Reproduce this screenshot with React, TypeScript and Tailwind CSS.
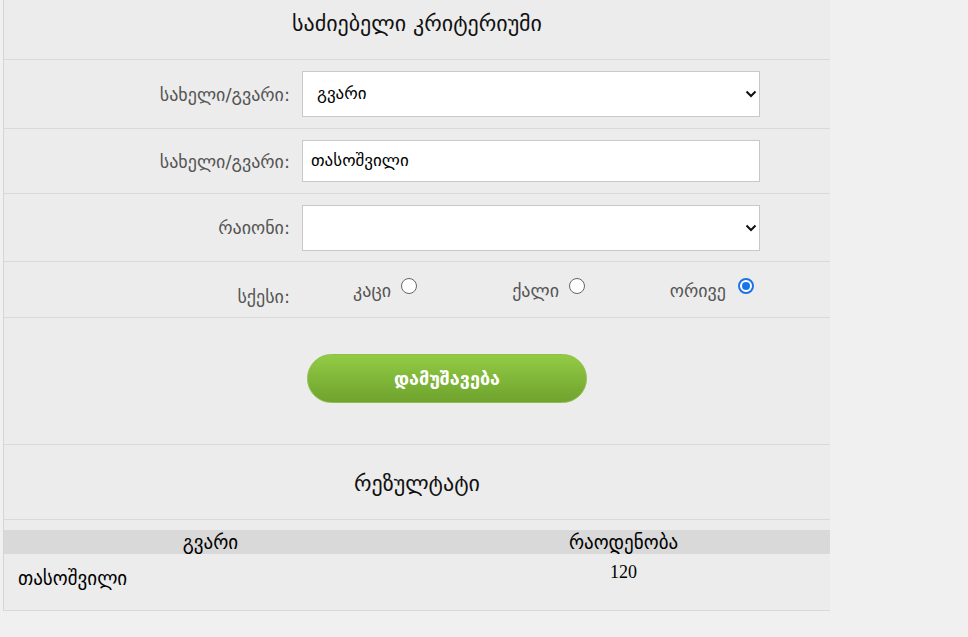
import React from "react";

const geo = "[font-family:'DejaVu_Sans','Noto_Sans',sans-serif]";

function Label({ children }: { children: React.ReactNode }) {
  return (
    <div className="w-[286px] shrink-0 text-right text-[18px] text-[#555]">{children}</div>
  );
}

function Chevron() {
  return (
    <svg width="12" height="8" viewBox="0 0 12 8" className="absolute right-[2px] top-1/2 -translate-y-1/2">
      <path d="M1.5 1.5 L6 6 L10.5 1.5" fill="none" stroke="#111" strokeWidth="2" />
    </svg>
  );
}

function Radio({ checked }: { checked?: boolean }) {
  return checked ? (
    <span className="ml-[12px] mt-[1px] inline-flex h-[16px] w-[16px] shrink-0 items-center justify-center rounded-full border-[2px] border-[#1a73e8] bg-white">
      <span className="h-[8px] w-[8px] rounded-full bg-[#1a73e8]" />
    </span>
  ) : (
    <span className="ml-[10px] mt-[1px] inline-block h-[16px] w-[16px] shrink-0 rounded-full border border-[#666] bg-white" />
  );
}

export default function App() {
  return (
    <div className={`min-h-[637px] w-[968px] bg-[#f0f0f0] ${geo}`}>
      <div className="ml-[3px] w-[827px] border-l border-[#d6d6d6] bg-[#ececec]">
        <div className="flex h-[59px] items-center justify-center pb-[14px] pt-[2px] text-[22px] text-[#111]">
          საძიებელი კრიტერიუმი
        </div>
        <div className="h-px bg-[#d9d9d9]" />
        <div className="flex h-[68px] items-center">
          <Label>სახელი/გვარი:</Label>
          <div className="relative ml-[12px] flex h-[46px] w-[458px] items-center border border-[#c8c8c8] bg-white pl-[14px] text-[17px] text-black">
            გვარი
            <Chevron />
          </div>
        </div>
        <div className="h-px bg-[#d9d9d9]" />
        <div className="flex h-[64px] items-center">
          <Label>სახელი/გვარი:</Label>
          <div className="ml-[12px] flex h-[42px] w-[458px] items-center border border-[#c8c8c8] bg-white pl-[8px] text-[17px] text-black">
            თასოშვილი
          </div>
        </div>
        <div className="h-px bg-[#d9d9d9]" />
        <div className="flex h-[67px] items-center">
          <Label>რაიონი:</Label>
          <div className="relative ml-[12px] h-[46px] w-[458px] border border-[#c8c8c8] bg-white">
            <Chevron />
          </div>
        </div>
        <div className="h-px bg-[#d9d9d9]" />
        <div className="flex h-[55px] items-start pt-[15px]">
          <div className="mt-[6px] w-[286px] text-right text-[18px] text-[#555]">სქესი:</div>
          <div className="flex w-[127px] items-start justify-end text-[18px] text-[#555]">
            <span>კაცი</span>
            <Radio />
          </div>
          <div className="flex w-[168px] items-start justify-end text-[18px] text-[#555]">
            <span>ქალი</span>
            <Radio />
          </div>
          <div className="flex w-[169px] items-start justify-end text-[18px] text-[#555]">
            <span>ორივე</span>
            <Radio checked />
          </div>
        </div>
        <div className="h-px bg-[#d9d9d9]" />
        <div className="flex h-[126px] items-start pt-[36px]">
          <button className="ml-[303px] flex h-[49px] w-[280px] items-center justify-center rounded-full border border-[#8cbf4a] bg-gradient-to-b from-[#93cb44] to-[#6fa32e] text-[18px] font-bold text-white">
            დამუშავება
          </button>
        </div>
        <div className="h-px bg-[#d9d9d9]" />
        <div className="flex h-[74px] items-center justify-center pt-[2px] text-[22px] text-[#111]">
          რეზულტატი
        </div>
        <div className="h-px bg-[#d9d9d9]" />
        <div className="h-[10px]" />
        <div className="flex h-[24px] items-center bg-[#d9d9d9] text-[19px] text-black">
          <div className="w-[413px] text-center">გვარი</div>
          <div className="w-[413px] text-center">რაოდენობა</div>
        </div>
        <div className="flex h-[56px] items-start text-black">
          <div className="w-[413px] pl-[14px] pt-[10px] text-[19px]">თასოშვილი</div>
          <div className="w-[413px] pt-[5px] text-center text-[18px] [font-family:'Liberation_Serif',serif]">120</div>
        </div>
        <div className="h-px bg-[#d9d9d9]" />
      </div>
    </div>
  );
}
